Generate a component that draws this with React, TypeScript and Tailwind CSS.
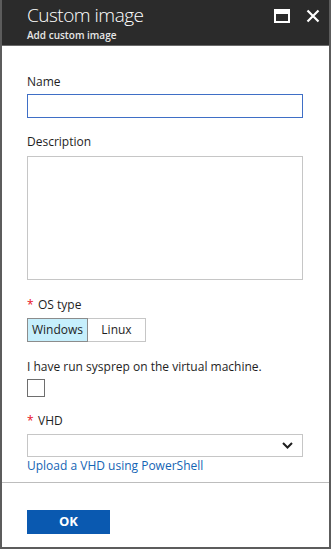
import React from "react";

const font = { fontFamily: '"Open Sans", "Noto Sans", sans-serif' };

export default function App() {
  return (
    <div
      className="w-[331px] h-[549px] flex flex-col bg-white border-x-2 border-b-2 border-[#5c5c5c] text-[#1e1e1e]"
      style={font}
    >
      <div className="h-[46px] bg-[#2b2b2b] border-b border-[#6a6a6a] flex items-start justify-between pl-[25px] pr-[8px] shrink-0">
        <div className="flex flex-col">
          <div className="text-[19px] font-light text-white leading-[24px] mt-[3px] tracking-[-0.5px]">Custom image</div>
          <div className="text-[10px] font-semibold text-[#e6e6e6] leading-[14px] mt-[1px]">Add custom image</div>
        </div>
        <div className="flex items-center gap-[16px] mt-[9px]">
          <div className="w-[16px] h-[14px] border-2 border-t-[5px] border-white" />
          <svg width="14" height="14" viewBox="0 0 14 14" className="mr-[1px]">
            <path d="M1.5 1.5 L12.5 12.5 M12.5 1.5 L1.5 12.5" stroke="white" strokeWidth="2.2" />
          </svg>
        </div>
      </div>

      <div className="flex flex-col pl-[25px] pr-[26px] text-[12px] leading-[18px]">
        <div className="mt-[27px]">Name</div>
        <div className="mt-[3px] h-[24px] border border-[#3f6fc6]" />

        <div className="mt-[15px]">Description</div>
        <div className="mt-[5px] h-[124px] border border-[#c6c6c6]" />

        <div className="mt-[16px] flex">
          <span className="text-[#e81123] w-[11px]">*</span>
          <span>OS type</span>
        </div>
        <div className="mt-[4px] flex h-[24px] w-[119px]">
          <div className="w-[61px] bg-[#c6effc] border border-[#8c8c8c] flex items-center justify-center">Windows</div>
          <div className="flex-1 border border-l-0 border-[#c6c6c6] flex items-center justify-center">Linux</div>
        </div>

        <div className="mt-[16px]">I have run sysprep on the virtual machine.</div>
        <div className="mt-[3px] w-[18px] h-[18px] border border-[#6e6e6e]" />

        <div className="mt-[15px] flex">
          <span className="text-[#e81123] w-[11px]">*</span>
          <span>VHD</span>
        </div>
        <div className="mt-[4px] h-[23px] border border-[#c6c6c6] flex items-center justify-end pr-[9px]">
          <svg width="11" height="7" viewBox="0 0 11 7">
            <path d="M1 1 L5.5 5.5 L10 1" stroke="#1e1e1e" strokeWidth="2" fill="none" />
          </svg>
        </div>
        <div className="text-[#1464b4]">Upload a VHD using PowerShell</div>
      </div>

      <div className="mt-[7px] border-t border-[#bdbdbd]" />

      <div className="pl-[25px] mt-[27px]">
        <div className="w-[83px] h-[24px] bg-[#0a59b0] text-white text-[13px] font-bold flex items-center justify-center">OK</div>
      </div>
    </div>
  );
}
